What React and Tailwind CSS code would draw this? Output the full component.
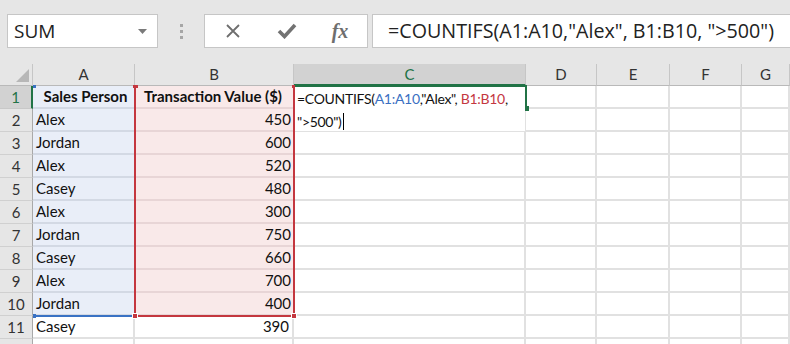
import React from 'react';

const names = ['Sales Person', 'Alex', 'Jordan', 'Alex', 'Casey', 'Alex', 'Jordan', 'Casey', 'Alex', 'Jordan', 'Casey', ''];
const values = ['Transaction Value ($)', '450', '600', '520', '480', '300', '750', '660', '700', '400', '390', ''];

const blank = 'h-full border-r-2 border-b-2 border-[#e1e1e1]';

const Row = ({ n }) => {
  const i = n - 1;
  const head = n === 1;
  const inA = n <= 10;
  const rowHead = head
    ? 'w-[33px] h-full flex items-center justify-center bg-[#d2d2d2] text-[#217346] border-r-2 border-r-[#217346] border-b border-b-[#c8c8c8]'
    : 'w-[33px] h-full flex items-center justify-center bg-[#e6e6e6] text-[#333] border-r border-r-[#a9a9a9] border-b border-b-[#d0d0d0]';
  const aCls = inA
    ? 'w-[102px] h-full flex items-center bg-[#e9eef8] border-b-2 border-[#d3d9e4] pl-[3px]'
    : 'w-[102px] h-full flex items-center bg-white border-r-2 border-b-2 border-[#e1e1e1] pl-[3px]';
  const bCls = inA
    ? 'w-[159px] h-full flex items-center bg-[#f9e9e9] border-b-2 border-[#e8d5d6] pr-[3px]'
    : 'w-[159px] h-full flex items-center bg-white border-r-2 border-b-2 border-[#e1e1e1] pr-[3px]';

  return (
    <div className="flex h-[23px] text-[15px] text-[#111]">
      {/* row 12 only peeks in at the bottom edge, its number is out of view */}
      <div className={rowHead}>{n < 12 ? n : ''}</div>
      <div className={aCls + (head ? ' justify-center font-bold' : '')}>{names[i]}</div>
      <div className={bCls + (head ? ' justify-center font-bold' : ' justify-end')}>{values[i]}</div>
      <div className={'w-[232px] ' + blank}></div>
      <div className={'w-[71px] ' + blank}></div>
      <div className={'w-[73px] ' + blank}></div>
      <div className={'w-[72px] ' + blank}></div>
      <div className={'flex-1 ' + blank}></div>
    </div>
  );
};

const ColHead = ({ w, label, active }) => (
  <div
    className={
      active
        ? w + ' h-full flex items-center justify-center bg-[#d2d2d2] text-[#217346] border-r border-[#c6c6c6] border-b-2 border-b-[#217346]'
        : w + ' h-full flex items-center justify-center bg-[#e6e6e6] text-[#333] border-r border-[#c6c6c6] border-b border-b-[#b9b9b9]'
    }
  >
    {label}
  </div>
);

export default function App() {
  return (
    <div className="w-[790px] h-[344px] overflow-hidden bg-white font-['Lato',sans-serif]">
      {/* toolbar */}
      <div className="h-[64px] bg-[#e6e6e6] flex items-start pt-[14px] pl-[7px] gap-[4px]">
        <div className="w-[151px] h-[34px] bg-white border border-[#c6c6c6] flex items-center justify-between pl-[6px] pr-[10px] font-['Open_Sans',sans-serif] text-[19px] text-[#222]">
          <span>SUM</span>
          <svg width="9" height="5" viewBox="0 0 9 5">
            <path d="M0 0 L9 0 L4.5 5 Z" fill="#7a7a7a" />
          </svg>
        </div>
        <div className="w-[38px] h-[34px] flex flex-col items-center justify-center gap-[3px]">
          <span className="w-[3px] h-[3px] bg-[#a6a6a6]"></span>
          <span className="w-[3px] h-[3px] bg-[#a6a6a6]"></span>
          <span className="w-[3px] h-[3px] bg-[#a6a6a6]"></span>
        </div>
        <div className="w-[164px] h-[34px] bg-white border border-[#c6c6c6] flex items-center">
          <div className="w-[56px] flex justify-center">
            <svg width="16" height="16" viewBox="0 0 16 16">
              <path d="M2 2 L14 14 M14 2 L2 14" stroke="#6e6e6e" strokeWidth="1.8" />
            </svg>
          </div>
          <div className="w-[52px] flex justify-center">
            <svg width="20" height="16" viewBox="0 0 20 16">
              <path d="M2 8 L7.5 13.5 L18 2" stroke="#727272" strokeWidth="3.6" fill="none" />
            </svg>
          </div>
          <div className="flex-1 flex justify-center font-['Liberation_Serif',serif] italic font-bold text-[20px] text-[#6e6e6e] leading-none">
            fx
          </div>
        </div>
        <div className="flex-1 h-[34px] bg-white border border-r-0 border-[#c6c6c6] flex items-center pl-[15px] font-['Open_Sans',sans-serif] text-[19.7px] text-[#222] whitespace-nowrap">
          =COUNTIFS(A1:A10,"Alex", B1:B10, "&gt;500")
        </div>
      </div>

      {/* column headers */}
      <div className="flex h-[22px] text-[15px]">
        <div className="w-[33px] h-full bg-[#e6e6e6] border-r border-[#c6c6c6] border-b border-b-[#b9b9b9] flex items-end justify-end pr-[3px] pb-[3px]">
          <svg width="13" height="13" viewBox="0 0 13 13">
            <path d="M13 0 L13 13 L0 13 Z" fill="#b7b7b7" />
          </svg>
        </div>
        <ColHead w="w-[102px]" label="A" />
        <ColHead w="w-[159px]" label="B" />
        <ColHead w="w-[232px]" label="C" active />
        <ColHead w="w-[71px]" label="D" />
        <ColHead w="w-[73px]" label="E" />
        <ColHead w="w-[72px]" label="F" />
        <ColHead w="flex-1" label="G" />
      </div>

      {/* grid body */}
      <div className="relative">
        {Array.from({ length: 12 }, (_, k) => (
          <Row key={k} n={k + 1} />
        ))}

        {/* blue range A1:A10 */}
        <div className="absolute left-[34px] top-[229px] w-[100px] h-[2px] bg-[#3a72c4]"></div>
        <div className="absolute left-[33px] top-[-1px] w-[3px] h-[3px] bg-[#3a72c4]"></div>
        <div className="absolute left-[33px] top-[228px] w-[3px] h-[4px] bg-[#3a72c4]"></div>

        {/* red range B1:B10 */}
        <div className="absolute left-[134px] top-0 w-[2px] h-[231px] bg-[#c4373f]"></div>
        <div className="absolute left-[293px] top-0 w-[2px] h-[231px] bg-[#c4373f]"></div>
        <div className="absolute left-[134px] top-[229px] w-[161px] h-[2px] bg-[#c4373f]"></div>
        <div className="absolute left-[133px] top-[-1px] w-[5px] h-[3px] bg-[#c4373f]"></div>
        <div className="absolute left-[292px] top-[-1px] w-[5px] h-[3px] bg-[#c4373f]"></div>
        <div className="absolute left-[132px] top-[227px] w-[6px] h-[6px] bg-[#c4373f] border border-white"></div>
        <div className="absolute left-[291px] top-[227px] w-[6px] h-[6px] bg-[#c4373f] border border-white"></div>

        {/* active cell C1 in edit mode */}
        <div className="absolute left-[295px] top-[-1px] w-[232px] h-[2px] bg-[#217346]"></div>
        <div className="absolute left-[525px] top-[-1px] w-[2px] h-[21px] bg-[#217346]"></div>
        <div className="absolute left-[524px] top-[20px] w-[5px] h-[5px] bg-[#217346]"></div>
        <div className="absolute left-[295px] top-[1px] w-[230px] h-[44px] bg-white pl-[2px] text-[14px] tracking-[-0.3px] leading-[23px] text-[#111]">
          <div className="whitespace-nowrap">
            =COUNTIFS(<span className="text-[#3a6fc2]">A1:A10</span>,"Alex", <span className="text-[#c4373f]">B1:B10</span>,
          </div>
          <div className="whitespace-nowrap flex items-center">
            "&gt;500")<span className="inline-block w-[1px] h-[17px] bg-black ml-[1px]"></span>
          </div>
        </div>
      </div>
    </div>
  );
}
